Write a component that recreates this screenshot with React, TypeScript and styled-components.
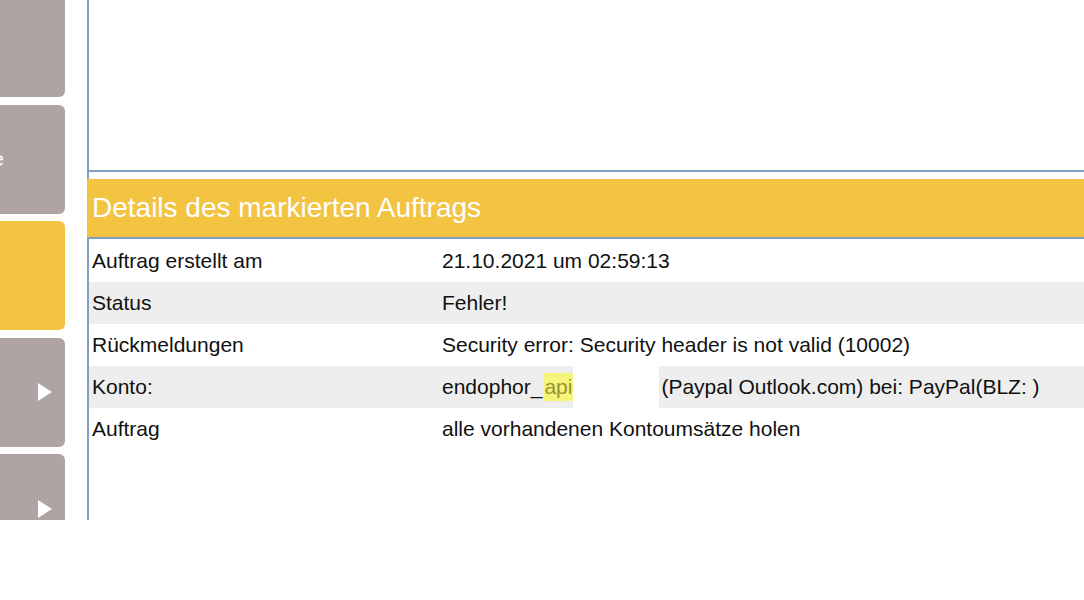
import React from "react";
import styled, { createGlobalStyle } from "styled-components";

const Global = createGlobalStyle`
  html, body { margin: 0; padding: 0; background: #ffffff; overflow: hidden; }
  body { font-family: "Liberation Sans", Arial, sans-serif; color: #111; }
`;

const Page = styled.div`
  display: flex;
  height: 520px;
  width: 1084px;
  overflow: hidden;
`;

const Sidebar = styled.nav`
  flex: 0 0 65px;
  width: 65px;
  min-width: 0;
  display: flex;
  flex-direction: column;
  gap: 7.5px;
  margin-top: -12px;
  margin-right: 22px;
`;

const Tile = styled.div<{ $active?: boolean }>`
  flex: 0 0 109px;
  width: 65px;
  display: flex;
  align-items: center;
  justify-content: flex-end;
  overflow: hidden;
  border-radius: 0 6px 6px 0;
  background: ${(p) => (p.$active ? "#f3c342" : "#afa3a3")};
`;

const TileLabel = styled.span`
  flex: 0 0 auto;
  color: #fff;
  font-size: 21px;
  white-space: nowrap;
  margin-right: 61px;
`;

const Arrow = styled.svg`
  width: 14px;
  height: 18px;
  margin-right: 13px;
  flex: 0 0 auto;
`;

const Main = styled.main`
  flex: 0 0 1000px;
  min-width: 0;
  display: flex;
  flex-direction: column;
  border-left: 2px solid #7f9fc4;
`;

const TopBox = styled.section`
  height: 170px;
  border-bottom: 2px solid #7f9fc4;
  background: #fff;
`;

const Header = styled.h2`
  margin: 7px 0 0 -2px;
  height: 58px;
  display: flex;
  align-items: center;
  padding-left: 5px;
  background: #f3c342;
  color: #fff;
  font-size: 28px;
  font-weight: 400;
  border-bottom: 2px solid #7f9fc4;
`;

const Table = styled.div`
  display: flex;
  flex-direction: column;
  padding-top: 1px;
`;

const Row = styled.div<{ $shaded?: boolean }>`
  display: grid;
  grid-template-columns: 350px 1fr;
  height: 42px;
  align-items: center;
  font-size: 21px;
  background: ${(p) => (p.$shaded ? "#eeeeee" : "#ffffff")};
`;

const Cell = styled.div`
  padding-left: 3px;
  white-space: nowrap;
  display: flex;
  align-items: center;
  height: 100%;
`;

const Mark = styled.span`
  display: inline-block;
  width: 29px;
  height: 28px;
  line-height: 28px;
  margin-left: 2px;
  overflow: hidden;
  background: #f5f57a;
  color: #9a9236;
`;

const Redacted = styled.span`
  display: inline-block;
  width: 86px;
  height: 100%;
  background: #ffffff;
`;

const After = styled.span`
  padding-left: 2px;
`;

const arrow = (
  <Arrow viewBox="0 0 14 18">
    <polygon points="0,0 14,9 0,18" fill="#ffffff" />
  </Arrow>
);

const rows: { label: string; value: React.ReactNode }[] = [
  { label: "Auftrag erstellt am", value: "21.10.2021 um 02:59:13" },
  { label: "Status", value: "Fehler!" },
  { label: "Rückmeldungen", value: "Security error: Security header is not valid (10002)" },
  {
    label: "Konto:",
    value: (
      <>
        endophor_
        <Mark>api1</Mark>
        <Redacted />
        <After>(Paypal Outlook.com) bei: PayPal(BLZ: )</After>
      </>
    ),
  },
  { label: "Auftrag", value: "alle vorhandenen Kontoumsätze holen" },
];

export default function App() {
  return (
    <>
      <Global />
      <Page>
        <Sidebar>
          <Tile />
          <Tile>
            <TileLabel>Aufträge</TileLabel>
          </Tile>
          <Tile $active />
          <Tile>{arrow}</Tile>
          <Tile>{arrow}</Tile>
        </Sidebar>
        <Main>
          <TopBox />
          <Header>Details des markierten Auftrags</Header>
          <Table>
            {rows.map((r, i) => (
              <Row key={r.label} $shaded={i % 2 === 1}>
                <Cell>{r.label}</Cell>
                <Cell>{r.value}</Cell>
              </Row>
            ))}
          </Table>
        </Main>
      </Page>
    </>
  );
}
